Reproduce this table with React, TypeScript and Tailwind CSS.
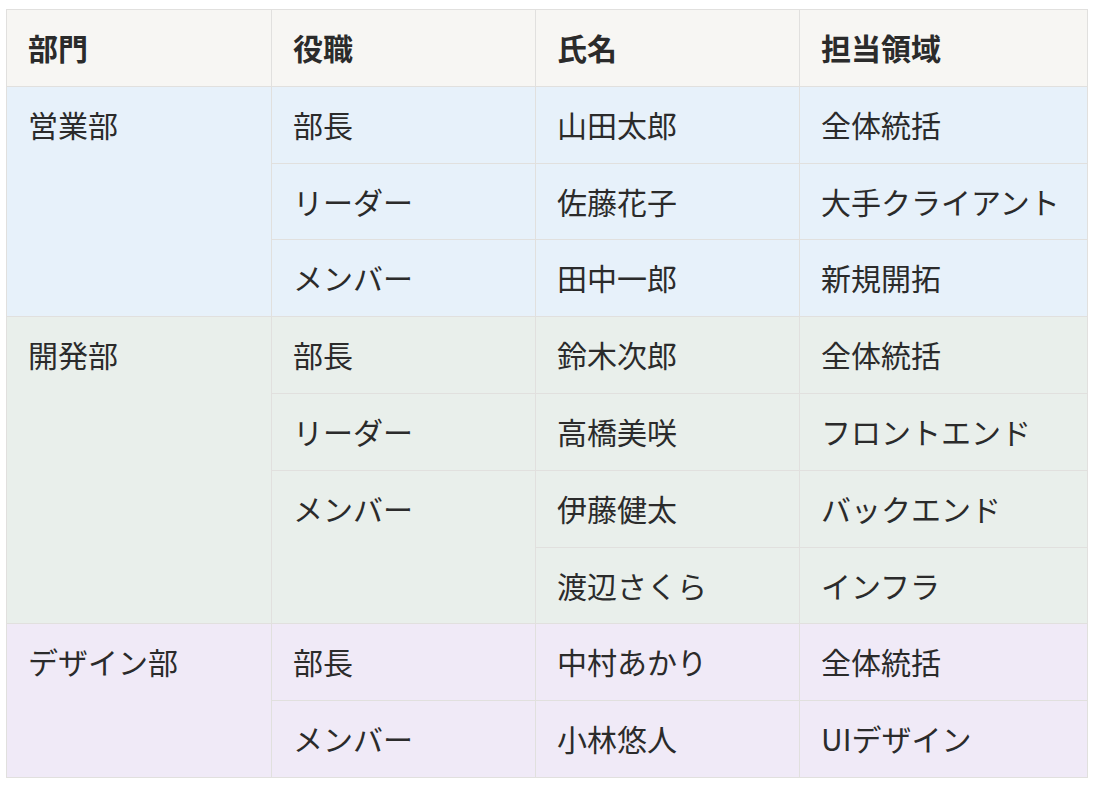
import React from 'react'

type Row = { role?: string; roleSpan?: number; name: string; area: string }
type Dept = { dept: string; bg: string; rows: Row[] }

const data: Dept[] = [
  {
    dept: '営業部',
    bg: 'bg-[#e7f1fa]',
    rows: [
      { role: '部長', name: '山田太郎', area: '全体統括' },
      { role: 'リーダー', name: '佐藤花子', area: '大手クライアント' },
      { role: 'メンバー', name: '田中一郎', area: '新規開拓' },
    ],
  },
  {
    dept: '開発部',
    bg: 'bg-[#e9efeb]',
    rows: [
      { role: '部長', name: '鈴木次郎', area: '全体統括' },
      { role: 'リーダー', name: '高橋美咲', area: 'フロントエンド' },
      { role: 'メンバー', roleSpan: 2, name: '伊藤健太', area: 'バックエンド' },
      { name: '渡辺さくら', area: 'インフラ' },
    ],
  },
  {
    dept: 'デザイン部',
    bg: 'bg-[#f0eaf7]',
    rows: [
      { role: '部長', name: '中村あかり', area: '全体統括' },
      { role: 'メンバー', name: '小林悠人', area: 'UIデザイン' },
    ],
  },
]

const cell = 'border border-[#e1e0de] px-[21px] pt-[15px] pb-[16px] align-top leading-[44.8px] whitespace-nowrap'

export default function App() {
  return (
    <div className="min-h-screen bg-white pl-[6px] pt-[9px] font-['Noto_Sans_CJK_JP','Noto_Sans',sans-serif] text-[30px] text-[#2b2b2b]">
      <table className="table-fixed border-collapse w-[1081px]">
        <colgroup>
          <col className="w-[265px]" />
          <col className="w-[264px]" />
          <col className="w-[264px]" />
          <col className="w-[288px]" />
        </colgroup>
        <thead>
          <tr className="bg-[#f7f6f3]">
            <th className={cn(cell, 'text-left font-bold')}>部門</th>
            <th className={cn(cell, 'text-left font-bold')}>役職</th>
            <th className={cn(cell, 'text-left font-bold')}>氏名</th>
            <th className={cn(cell, 'text-left font-bold')}>担当領域</th>
          </tr>
        </thead>
        <tbody>
          {data.map((d) =>
            d.rows.map((r, i) => (
              <tr key={d.dept + i} className={d.bg}>
                {i === 0 && (
                  <td rowSpan={d.rows.length} className={cell}>
                    {d.dept}
                  </td>
                )}
                {r.role && (
                  <td rowSpan={r.roleSpan ?? 1} className={cell}>
                    {r.role}
                  </td>
                )}
                <td className={cell}>{r.name}</td>
                <td className={cell}>{r.area}</td>
              </tr>
            ))
          )}
        </tbody>
      </table>
    </div>
  )
}

function cn(...c: string[]) {
  return c.join(' ')
}
